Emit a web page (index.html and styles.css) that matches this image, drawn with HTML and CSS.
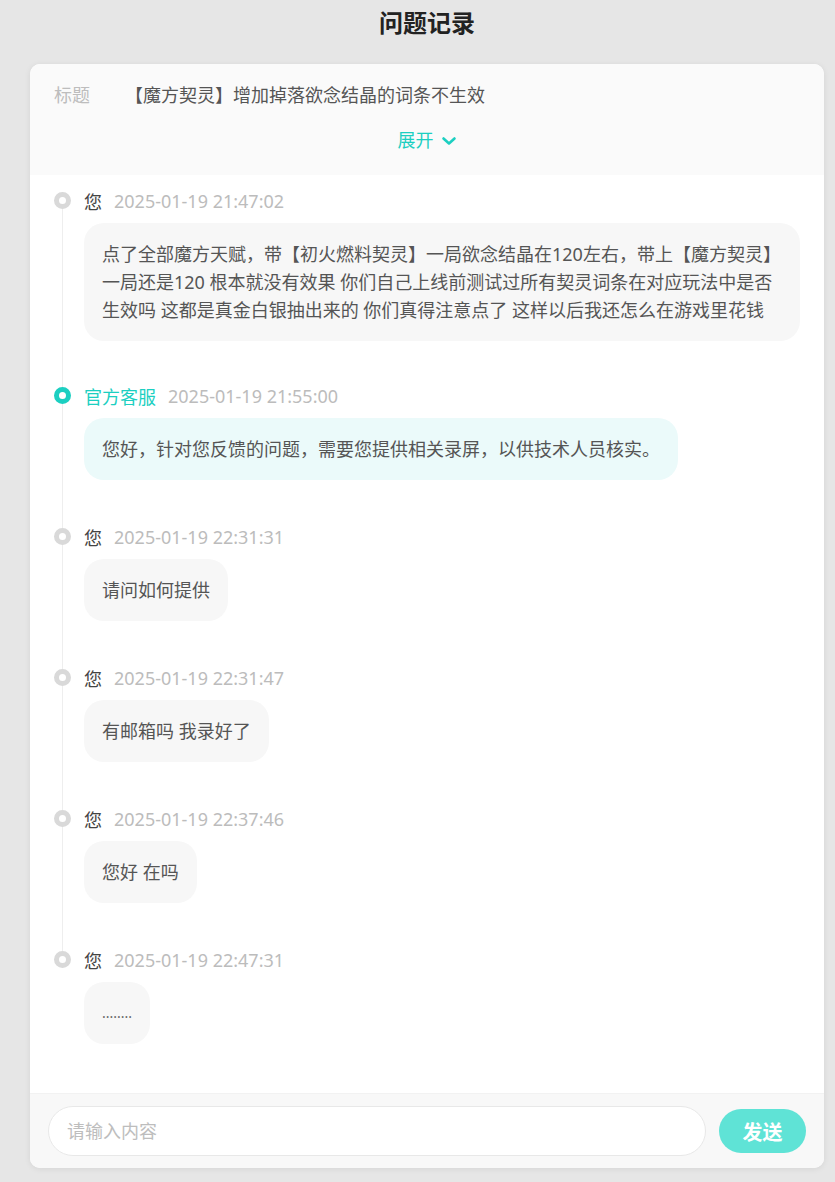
FILE: index.html
```html
<!DOCTYPE html>
<html lang="zh-CN">

<head>
  <meta charset="UTF-8">
  <meta name="viewport" content="width=device-width, initial-scale=1.0">
  <title>问题记录</title>
  <link rel="stylesheet" href="styles.css">
</head>

<body>
  <h1 class="page-title">问题记录</h1>

  <div class="card">
    <div class="issue-head">
      <div class="issue-row">
        <span class="issue-label">标题</span>
        <span class="issue-title">【魔方契灵】增加掉落欲念结晶的词条不生效</span>
      </div>
      <div class="expand">
        展开
        <svg class="chevron" width="16" height="10" viewBox="0 0 16 10">
          <path d="M2.5 2.5 L8 7.5 L13.5 2.5" fill="none" stroke="currentColor" stroke-width="2.6" stroke-linecap="round" stroke-linejoin="round" />
        </svg>
      </div>
    </div>

    <div class="timeline">
      <div class="entry">
        <div class="entry-head">
          <span class="dot"></span>
          <span class="who">您</span>
          <span class="time">2025-01-19 21:47:02</span>
        </div>
        <div class="bubble">点了全部魔方天赋，带【初火燃料契灵】一局欲念结晶在120左右，带上【魔方契灵】一局还是120 根本就没有效果 你们自己上线前测试过所有契灵词条在对应玩法中是否生效吗 这都是真金白银抽出来的 你们真得注意点了 这样以后我还怎么在游戏里花钱</div>
      </div>

      <div class="entry staff">
        <div class="entry-head">
          <span class="dot"></span>
          <span class="who">官方客服</span>
          <span class="time">2025-01-19 21:55:00</span>
        </div>
        <div class="bubble">您好，针对您反馈的问题，需要您提供相关录屏，以供技术人员核实。</div>
      </div>

      <div class="entry">
        <div class="entry-head">
          <span class="dot"></span>
          <span class="who">您</span>
          <span class="time">2025-01-19 22:31:31</span>
        </div>
        <div class="bubble">请问如何提供</div>
      </div>

      <div class="entry">
        <div class="entry-head">
          <span class="dot"></span>
          <span class="who">您</span>
          <span class="time">2025-01-19 22:31:47</span>
        </div>
        <div class="bubble">有邮箱吗 我录好了</div>
      </div>

      <div class="entry">
        <div class="entry-head">
          <span class="dot"></span>
          <span class="who">您</span>
          <span class="time">2025-01-19 22:37:46</span>
        </div>
        <div class="bubble">您好 在吗</div>
      </div>

      <div class="entry last">
        <div class="entry-head">
          <span class="dot"></span>
          <span class="who">您</span>
          <span class="time">2025-01-19 22:47:31</span>
        </div>
        <div class="bubble dots">........</div>
      </div>
    </div>

    <div class="composer">
      <input type="text" class="composer-input" placeholder="请输入内容">
      <button class="send-btn">发送</button>
    </div>
  </div>
</body>

</html>
```

FILE: styles.css
```css
* {
  box-sizing: border-box;
  margin: 0;
  padding: 0;
}

body {
  font-family: "Noto Sans", "Noto Sans CJK SC", sans-serif;
  background-color: #e6e6e6;
  padding: 0 11px 15px 30px;
  color: #555;
}

.page-title {
  font-size: 24px;
  font-weight: bold;
  color: #222;
  text-align: center;
  line-height: 32px;
  padding: 7px 0 25px;
}

.card {
  background-color: #fff;
  border-radius: 10px;
  overflow: hidden;
  box-shadow: 0 1px 6px rgba(0, 0, 0, 0.08);
}

.issue-head {
  background-color: #fafafa;
  padding: 18px 24px 23px;
}

.issue-row {
  display: flex;
  align-items: center;
  font-size: 18px;
  line-height: 26px;
}

.issue-label {
  color: #bdbdbd;
  width: 68px;
  flex-shrink: 0;
}

.issue-title {
  color: #555;
  margin-left: 3px;
}

.expand {
  display: flex;
  justify-content: center;
  align-items: center;
  gap: 7px;
  margin-top: 20px;
  color: #1ccfc1;
  font-size: 18px;
  line-height: 24px;
}

.chevron {
  margin-top: 2px;
}

.timeline {
  padding: 15px 24px 49px 24px;
}

.entry {
  position: relative;
  padding-left: 30px;
  margin-bottom: 46px;
}

.entry:first-child {
  margin-bottom: 44px;
}

.entry.last {
  margin-bottom: 0;
}

/* connector line between dots */
.entry::before {
  content: "";
  position: absolute;
  left: 8px;
  top: 11px;
  bottom: -57px;
  width: 1px;
  background-color: #eee;
}

.entry.last::before {
  display: none;
}

.entry-head {
  display: flex;
  align-items: center;
  gap: 12px;
  height: 22px;
  margin-bottom: 11px;
  font-size: 18px;
}

.dot {
  position: absolute;
  left: 0;
  top: 2px;
  width: 17px;
  height: 17px;
  border-radius: 50%;
  border: 5.5px solid #d9d9d9;
  background-color: #fff;
}

.who {
  color: #444;
}

.time {
  color: #bcbcbc;
}

.bubble {
  display: inline-block;
  max-width: 716px;
  background-color: #f7f7f7;
  border-radius: 20px;
  padding: 17px 18px;
  font-size: 18px;
  line-height: 28px;
  color: #555;
}

.staff .dot {
  border-color: #1ccfc1;
}

.staff .who {
  color: #1ccfc1;
}

.staff .bubble {
  background-color: #ebfafa;
}

.bubble.dots {
  font-size: 14px;
  color: #666;
}

.composer {
  display: flex;
  align-items: center;
  gap: 13px;
  background-color: #f8f8f8;
  border-top: 1px solid #f2f2f2;
  padding: 12px 18px 12px;
}

.composer-input {
  flex: 1;
  height: 50px;
  border: 1px solid #e8e8e8;
  border-radius: 25px;
  background-color: #fff;
  padding: 0 18px;
  font-family: inherit;
  font-size: 18px;
  color: #555;
  outline: none;
}

.composer-input::placeholder {
  color: #bdbdbd;
}

.send-btn {
  width: 87px;
  height: 44px;
  border: none;
  border-radius: 22px;
  background-color: #5fe3d6;
  color: #fff;
  font-family: inherit;
  font-size: 20px;
  font-weight: bold;
  cursor: pointer;
}
```
